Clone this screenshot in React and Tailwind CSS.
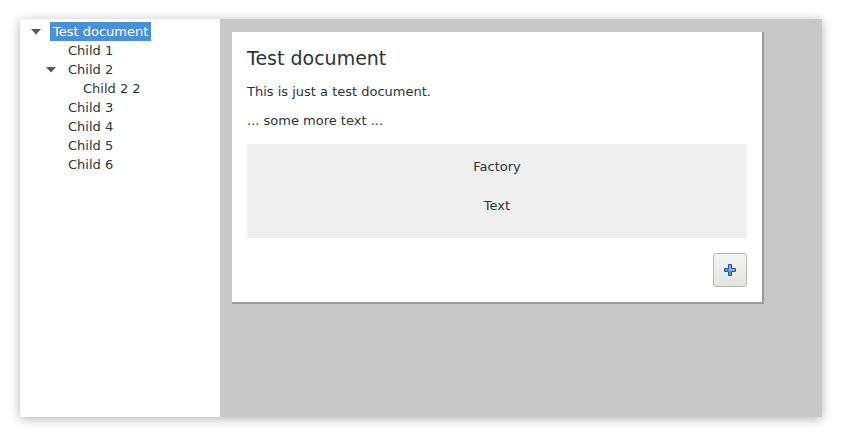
import React from 'react';

const tree = [
  { label: 'Test document', level: 0, open: true, selected: true },
  { label: 'Child 1', level: 1 },
  { label: 'Child 2', level: 1, open: true },
  { label: 'Child 2 2', level: 2 },
  { label: 'Child 3', level: 1 },
  { label: 'Child 4', level: 1 },
  { label: 'Child 5', level: 1 },
  { label: 'Child 6', level: 1 },
];

const indents = ['pl-[8px]', 'pl-[23px]', 'pl-[38px]'];

const TreeRow = ({ item }) => (
  <div className={`flex items-center h-[19px] ${indents[item.level]}`}>
    <div className="w-[22px] h-[19px] flex items-center pl-[3px]">
      {item.open && (
        <svg width="10" height="6" viewBox="0 0 10 6">
          <path d="M0 0 H10 L5 5.5 Z" fill="#555753" />
        </svg>
      )}
    </div>
    <span
      className={
        item.selected
          ? 'px-[3px] h-[19px] leading-[19px] bg-[#4a90d9] text-white'
          : 'px-[3px] h-[19px] leading-[19px] text-[#2e3436]'
      }
    >
      {item.label}
    </span>
  </div>
);

const PlusIcon = () => (
  <svg width="14" height="14" viewBox="0 0 14 14">
    <path
      d="M5.5 1.5 H8.5 V5.5 H12.5 V8.5 H8.5 V12.5 H5.5 V8.5 H1.5 V5.5 H5.5 Z"
      fill="#5b8fd6"
      stroke="#2a56a0"
      strokeWidth="1"
    />
    <path d="M6.5 2.5 H7.5 V6.5 H11.5 V7.5 H6.5 Z" fill="#b4d0f3" />
  </svg>
);

export default function App() {
  return (
    <div
      className="w-[841px] h-[437px] bg-white pl-[20px] pt-[19px] text-[13px] text-[#2e3436]"
      style={{ fontFamily: '"DejaVu Sans", sans-serif' }}
    >
      <div className="flex w-[802px] h-[398px] shadow-[0_2px_10px_rgba(0,0,0,0.3)]">
        {/* Tree */}
        <div className="w-[200px] bg-white pt-[3px]">
          {tree.map((item) => (
            <TreeRow key={item.label} item={item} />
          ))}
        </div>

        {/* Document view */}
        <div className="flex-1 bg-[#c8c8c8] pl-[12px] pt-[13px]">
          <div className="w-[532px] h-[272px] bg-white border-r-2 border-b-2 border-[#9a9a9a] p-[15px] flex flex-col">
            <h1 className="text-[19px] leading-[24px] mt-[-1px] text-[#2e3436]">Test document</h1>
            <p className="mt-[13px] leading-[18px]">This is just a test document.</p>
            <p className="mt-[11px] leading-[18px]">... some more text ...</p>
            <div className="mt-[14px] h-[94px] bg-[#efefef] flex flex-col items-center pt-[13px]">
              <div className="h-[20px] leading-[20px]">Factory</div>
              <div className="mt-[19px] h-[20px] leading-[20px]">Text</div>
            </div>
            <div className="mt-auto flex justify-end">
              <button className="w-[34px] h-[34px] rounded-[3px] border border-[#b6b6b3] bg-gradient-to-b from-[#f4f4f4] to-[#e4e4e2] flex items-center justify-center">
                <PlusIcon />
              </button>
            </div>
          </div>
        </div>
      </div>
    </div>
  );
}
